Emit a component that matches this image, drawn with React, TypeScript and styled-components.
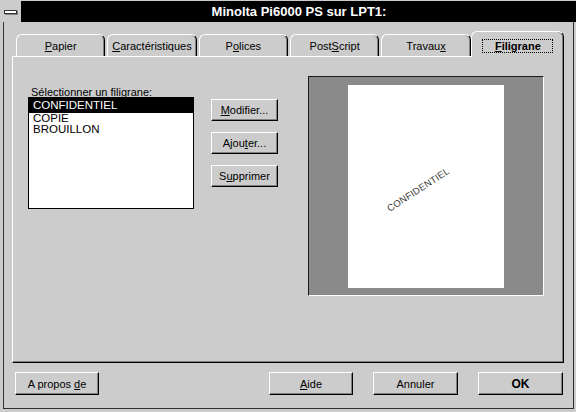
import React from "react";
import styled, { createGlobalStyle, css } from "styled-components";

const FACE = "#cccccc";
const SHADOW = "#808080";

const GlobalStyle = createGlobalStyle`
  html, body { margin: 0; padding: 0; background: ${FACE}; }
  body { font-family: "Liberation Sans", Arial, sans-serif; font-size: 11px; color: #000; }
`;

const Window = styled.div`
  width: 576px;
  height: 412px;
  box-sizing: border-box;
  padding-top: 1px;
  display: flex;
  flex-direction: column;
  background: ${FACE};
`;

const TitleBar = styled.div`
  height: 21px;
  display: flex;
  background: #000;
`;

const ControlBox = styled.div`
  width: 22px;
  height: 21px;
  box-sizing: border-box;
  background: ${FACE};
  border-right: 1px solid #000;
  display: flex;
  align-items: center;
  justify-content: center;
`;

const ControlDash = styled.span`
  width: 13px;
  height: 4px;
  box-sizing: border-box;
  background: #fff;
  border: 1px solid #333;
  box-shadow: 1px 1px 0 #808080;
`;

const Title = styled.div`
  flex: 1;
  color: #fff;
  font-weight: bold;
  font-size: 13px;
  line-height: 21px;
  text-align: center;
`;

const Frame = styled.div`
  flex: 1;
  margin: 0 2px 3px 3px;
  border: 1px solid #303030;
  border-top: none;
  padding: 9px 9px 0 8px;
  display: flex;
  flex-direction: column;
`;

const TabStrip = styled.div`
  height: 25px;
  padding: 0 2px 0 4px;
  display: grid;
  grid-template-columns: repeat(6, 1fr);
  column-gap: 2px;
  align-items: end;
  position: relative;
  z-index: 1;
`;

const Tab = styled.div<{ $active?: boolean }>`
  box-sizing: border-box;
  height: 22px;
  border: 1px solid #fff;
  border-bottom: none;
  border-right-color: #000;
  border-radius: 6px 6px 0 0;
  box-shadow: inset -1px 0 0 ${SHADOW};
  background: ${FACE};
  text-align: center;
  padding-top: 5px;
  line-height: 13px;
  white-space: nowrap;
  ${(p) =>
    p.$active &&
    css`
      height: 26px;
      margin: 0 -2px -1px;
      padding-top: 7px;
      font-weight: bold;
    `}
`;

const Focus = styled.span`
  display: inline-block;
  border: 1px dotted #000;
  padding: 0 11px 0 12px;
  line-height: 12px;
`;

const U = styled.span`
  text-decoration: underline;
  text-underline-offset: 1px;
`;

const Panel = styled.div`
  height: 307px;
  box-sizing: border-box;
  border: 1px solid #fff;
  border-right-color: #000;
  border-bottom-color: #000;
  box-shadow: inset -1px -1px 0 ${SHADOW};
  padding: 19px 19px 0 15px;
  display: flex;
  align-items: flex-start;
`;

const LeftCol = styled.div`
  margin-top: 11px;
  width: 166px;
  display: flex;
  flex-direction: column;
`;

const FieldLabel = styled.div`
  line-height: 10px;
  padding-left: 3px;
  white-space: nowrap;
`;

const ListBox = styled.div`
  height: 112px;
  box-sizing: border-box;
  border: 1px solid #000;
  background: #fff;
  display: flex;
  flex-direction: column;
`;

const ListItem = styled.div<{ $selected?: boolean }>`
  font-size: 11.5px;
  padding-left: 4px;
  line-height: 11px;
  ${(p) =>
    p.$selected &&
    css`
      background: #000;
      color: #fff;
      line-height: 15px;
    `}
`;

const ButtonCol = styled.div`
  margin: 23px 0 0 17px;
  display: flex;
  flex-direction: column;
  gap: 11px;
`;

const Button = styled.button<{ $w: number; $h?: number; $bold?: boolean }>`
  width: ${(p) => p.$w}px;
  height: ${(p) => p.$h ?? 22}px;
  box-sizing: border-box;
  padding: 0;
  margin: 0;
  background: ${FACE};
  border: 1px solid #fff;
  border-right-color: #000;
  border-bottom-color: #000;
  box-shadow: inset -1px -1px 0 ${SHADOW};
  font-family: "Liberation Sans", Arial, sans-serif;
  font-size: ${(p) => (p.$bold ? 12 : 11)}px;
  font-weight: ${(p) => (p.$bold ? "bold" : "normal")};
  color: #000;
  line-height: 18px;
`;

const Preview = styled.div`
  margin-left: auto;
  width: 236px;
  height: 220px;
  box-sizing: border-box;
  background: #8a8a8a;
  border: 1px solid #fff;
  border-top-color: #1a1a1a;
  border-left-color: #1a1a1a;
  padding-top: 8px;
  display: flex;
  justify-content: center;
  align-items: flex-start;
`;

const Page = styled.div`
  width: 156px;
  height: 203px;
  background: #fff;
  display: flex;
  align-items: center;
  justify-content: center;
`;

const Watermark = styled.span`
  font-size: 9.5px;
  color: #3a3a3a;
  letter-spacing: 0.2px;
  transform: translate(-8px, 3px) rotate(-33deg);
`;

const ButtonRow = styled.div`
  margin: 9px 1px 0 3px;
  display: flex;
  gap: 20px;
`;

const Spacer = styled.div`
  flex: 1;
`;

const tabs: { label: React.ReactNode; active?: boolean }[] = [
  { label: <><U>P</U>apier</> },
  { label: <><U>C</U>aractéristiques</> },
  { label: <>P<U>o</U>lices</> },
  { label: <>Post<U>S</U>cript</> },
  { label: <>Travau<U>x</U></> },
  { label: <Focus><U>F</U>iligrane</Focus>, active: true },
];

export default function App() {
  return (
    <>
      <GlobalStyle />
      <Window>
        <TitleBar>
          <ControlBox>
            <ControlDash />
          </ControlBox>
          <Title>Minolta Pi6000 PS sur LPT1:</Title>
        </TitleBar>
        <Frame>
          <TabStrip>
            {tabs.map((t, i) => (
              <Tab key={i} $active={t.active}>
                {t.label}
              </Tab>
            ))}
          </TabStrip>
          <Panel>
            <LeftCol>
              <FieldLabel>
                Sé<U>l</U>ectionner un filigrane:
              </FieldLabel>
              <ListBox>
                <ListItem $selected>CONFIDENTIEL</ListItem>
                <ListItem>COPIE</ListItem>
                <ListItem>BROUILLON</ListItem>
              </ListBox>
            </LeftCol>
            <ButtonCol>
              <Button $w={67}>
                <U>M</U>odifier...
              </Button>
              <Button $w={67}>
                Ajou<U>t</U>er...
              </Button>
              <Button $w={67}>
                S<U>u</U>pprimer
              </Button>
            </ButtonCol>
            <Preview>
              <Page>
                <Watermark>CONFIDENTIEL</Watermark>
              </Page>
            </Preview>
          </Panel>
          <ButtonRow>
            <Button $w={84} $h={23}>
              A propos <U>d</U>e
            </Button>
            <Spacer />
            <Button $w={84} $h={23}>
              <U>A</U>ide
            </Button>
            <Button $w={85} $h={23}>
              Annuler
            </Button>
            <Button $w={85} $h={23} $bold>
              OK
            </Button>
          </ButtonRow>
        </Frame>
      </Window>
    </>
  );
}
